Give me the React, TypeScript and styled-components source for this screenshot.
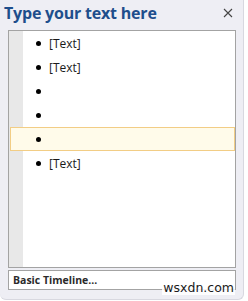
import styled, { createGlobalStyle } from "styled-components";

const GlobalStyle = createGlobalStyle`
  html, body {
    margin: 0;
    padding: 0;
    background: #ffffff;
  }
  body {
    font-family: "Open Sans", "Noto Sans", sans-serif;
  }
`;

const Pane = styled.div`
  position: relative;
  box-sizing: border-box;
  width: 244px;
  height: 300px;
  background: #eeeef4;
  border-right: 1px solid #d8d8e0;
  border-bottom: 1px solid #d8d8e0;
  border-bottom-left-radius: 6px;
  border-bottom-right-radius: 6px;
  display: flex;
  flex-direction: column;
  padding: 0 7px 0 8px;
`;

const TitleBar = styled.div`
  display: flex;
  align-items: center;
  justify-content: space-between;
  height: 30px;
  margin-left: -4px;
`;

const Title = styled.h1`
  margin: 0;
  color: #1e4e8c;
  font-family: "Open Sans", sans-serif;
  font-weight: 700;
  font-size: 16px;
  letter-spacing: -0.2px;
  line-height: 20px;
  padding-bottom: 4px;
`;

const CloseButton = styled.button`
  border: none;
  background: none;
  padding: 0;
  margin: 0 2px 4px 0;
  width: 12px;
  height: 12px;
  display: flex;
  align-items: center;
  justify-content: center;
`;

const TextArea = styled.div`
  box-sizing: border-box;
  height: 238px;
  border: 1px solid #a3a3a3;
  background: #ffffff;
  display: flex;
`;

const Gutter = styled.div`
  width: 14px;
  background: #e8e8e8;
  flex-shrink: 0;
`;

const List = styled.ul`
  list-style: none;
  margin: 0;
  padding: 0;
  flex: 1;
`;

const Row = styled.li<{ $active?: boolean }>`
  box-sizing: border-box;
  height: 24px;
  display: flex;
  align-items: center;
  margin-left: ${(p) => (p.$active ? "-13px" : "0")};
  padding-left: ${(p) => (p.$active ? "25px" : "12px")};
  background: ${(p) => (p.$active ? "#fffbea" : "transparent")};
  border: 1px solid ${(p) => (p.$active ? "#f2cd85" : "transparent")};
  font-family: "Open Sans", sans-serif;
  font-size: 12px;
  color: #1a1a1a;
`;

const Bullet = styled.span`
  width: 5px;
  height: 5px;
  border-radius: 50%;
  background: #000000;
  margin-right: 8px;
  flex-shrink: 0;
`;

const Footer = styled.div`
  box-sizing: border-box;
  margin-top: 2px;
  height: 20px;
  border: 1px solid #a3a3a3;
  background: #ffffff;
  display: flex;
  align-items: center;
  padding-left: 4px;
  font-family: "Open Sans", sans-serif;
  font-size: 10.5px;
  font-weight: 700;
  color: #2a2a2a;
`;

const Watermark = styled.span`
  position: absolute;
  right: 8px;
  bottom: 4px;
  font-family: "DejaVu Sans", sans-serif;
  font-size: 12.5px;
  color: #1a1a1a;
  background: rgba(255, 255, 255, 0.85);
  padding: 0 1px;
  line-height: 14px;
`;

const items = ["[Text]", "[Text]", "", "", "", "[Text]"];

export default function App() {
  return (
    <>
      <GlobalStyle />
      <Pane>
        <TitleBar>
          <Title>Type your text here</Title>
          <CloseButton aria-label="Close">
            <svg width="10" height="10" viewBox="0 0 10 10">
              <path d="M1 1L9 9M9 1L1 9" stroke="#444" strokeWidth="1.1" />
            </svg>
          </CloseButton>
        </TitleBar>
        <TextArea>
          <Gutter />
          <List>
            {items.map((t, i) => (
              <Row key={i} $active={i === 4}>
                <Bullet />
                {t}
              </Row>
            ))}
          </List>
        </TextArea>
        <Footer>Basic Timeline...</Footer>
        <Watermark>wsxdn.com</Watermark>
      </Pane>
    </>
  );
}
